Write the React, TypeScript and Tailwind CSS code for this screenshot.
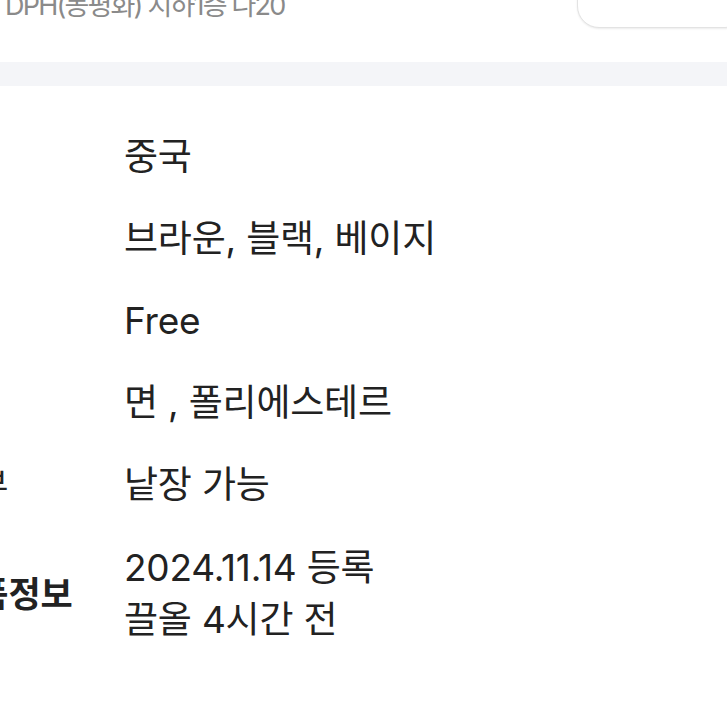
const rows = [
  { label: '원산지', values: ['중국'] },
  { label: '색상', values: ['브라운, 블랙, 베이지'] },
  { label: '사이즈', values: ['Free'] },
  { label: '소재', values: ['면 , 폴리에스테르'] },
  { label: '낱장여부', values: ['낱장 가능'] },
];

export default function App() {
  return (
    <div
      className="w-[727px] h-[727px] overflow-hidden bg-white text-[#222222]"
      style={{ fontFamily: 'Inter, "Noto Sans CJK KR", sans-serif' }}
    >
      {/* 매장 위치 + 버튼 (위쪽 잘림) */}
      <div className="flex items-start justify-between h-[62px] pl-[5px]">
        <p className="-mt-[12px] text-[27px] leading-[36px] tracking-[-1.8px] text-[#8a8a8a]">DPH(동평화) 지하1층 나20</p>
        <div className="-mt-[30px] w-[170px] h-[58px] -mr-[20px] rounded-[22px] border border-[#e3e3e3] shadow-[0_1px_2px_rgba(0,0,0,0.08)] bg-white" />
      </div>

      <div className="h-[24px] bg-[#f4f5f8]" />

      <div className="pt-[46px] flex flex-col gap-[32px]">
        {rows.map((row) => (
          <div key={row.label} className="flex items-center">
            <div className="w-[124px] shrink-0">
              <span className="block -ml-[113px] whitespace-nowrap text-[33px] leading-[50px]">{row.label}</span>
            </div>
            <div className="text-[37px] leading-[50px] tracking-[-0.2px]">
              {row.values.map((v) => (
                <p key={v}>{v}</p>
              ))}
            </div>
          </div>
        ))}
        <div className="flex items-center">
          <div className="w-[124px] shrink-0">
            <span className="block -ml-[56px] whitespace-nowrap text-[35px] font-bold leading-[50px]">상품정보</span>
          </div>
          <div className="text-[37px] leading-[52px] tracking-[-0.2px]">
            <p>2024.11.14 등록</p>
            <p>끌올 4시간 전</p>
          </div>
        </div>
      </div>
    </div>
  );
}
